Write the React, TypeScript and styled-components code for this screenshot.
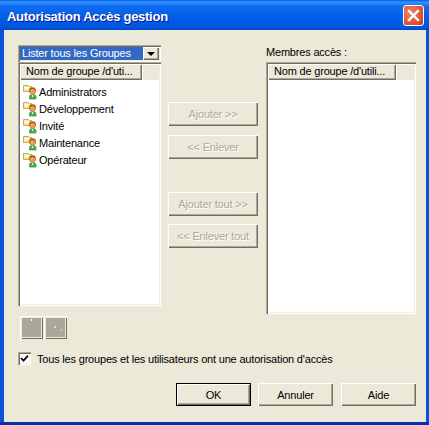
import React from "react";
import styled, { createGlobalStyle } from "styled-components";

const Global = createGlobalStyle`
  html, body { margin: 0; padding: 0; width: 429px; height: 425px; overflow: hidden; background: #ece9d8; }
  * { box-sizing: border-box; }
`;

const raised = `
  background: #ece9d8;
  box-shadow: inset 1px 1px 0 #fff, inset -1px -1px 0 #716f64, inset -2px -2px 0 #aca899;
`;

const sunken = `
  box-shadow: inset 1px 1px 0 #aca899, inset 2px 2px 0 #716f64, inset -1px -1px 0 #fff, inset -2px -2px 0 #f1efe2;
`;

const Window = styled.div`
  width: 429px;
  height: 425px;
  display: flex;
  flex-direction: column;
  font-family: "Liberation Sans", Arial, sans-serif;
  font-size: 11px;
  letter-spacing: -0.19px;
  color: #000;
  background: linear-gradient(180deg, #0855dd 0, #0855dd 422px, #0a2eb0 422px);
`;

const TitleBar = styled.div`
  flex: 0 0 30px;
  display: flex;
  align-items: center;
  justify-content: space-between;
  padding: 1px 5px 0 7px;
  background: linear-gradient(180deg, #0058e6 0%, #3a93ff 7%, #288eff 10%, #0f6cf0 20%, #0560e8 50%, #0058e4 80%, #0055dd 90%, #0046c8 100%);
`;

const Title = styled.div`
  margin-top: 1px;
  font-weight: 700;
  font-size: 13px;
  letter-spacing: -0.27px;
  color: #fff;
  text-shadow: 1px 1px 0 #0f1089;
`;

const CloseButton = styled.div`
  width: 21px;
  height: 21px;
  border: 1px solid #fff;
  border-radius: 3px;
  background: radial-gradient(circle at 35% 35%, #f0876a 0%, #e2593a 55%, #c5391e 100%);
  display: flex;
  align-items: center;
  justify-content: center;
`;

const Frame = styled.div`
  flex: 1;
  display: flex;
  flex-direction: column;
  margin: 0 3px 3px 4px;
  padding: 15px 10px 0 14px;
  background: #ece9d8;
`;

const Columns = styled.div`
  display: grid;
  grid-template-columns: 142px 90px 150px;
  column-gap: 8px;
  height: 294px;
`;

const LeftColumn = styled.div`
  display: flex;
  flex-direction: column;
  width: 143px;
`;

const Combo = styled.div`
  height: 17px;
  display: flex;
  padding: 2px;
  background: #fff;
  ${sunken}
`;

const ComboValue = styled.div`
  flex: 1;
  background: #316ac5;
  color: #fff;
  line-height: 13px;
  padding-left: 2px;
  white-space: nowrap;
`;

const ComboArrow = styled.div`
  flex: 0 0 16px;
  display: flex;
  align-items: center;
  justify-content: center;
  ${raised}
  &::after {
    content: "";
    border-left: 4px solid transparent;
    border-right: 4px solid transparent;
    border-top: 4px solid #000;
  }
`;

const ListView = styled.div<{ $height: number }>`
  height: ${(p) => p.$height}px;
  padding: 2px;
  background: #fff;
  display: flex;
  flex-direction: column;
  ${sunken}
`;

const HeaderRow = styled.div`
  flex: 0 0 16px;
  display: flex;
`;

const HeaderCell = styled.div<{ $width: number }>`
  flex: 0 0 ${(p) => p.$width}px;
  padding-left: 6px;
  line-height: 15px;
  white-space: nowrap;
  overflow: hidden;
  ${raised}
`;

const HeaderFill = styled.div`
  flex: 1;
  background: #ece9d8;
  box-shadow: inset 1px 1px 0 #fff;
`;

const Rows = styled.ul`
  list-style: none;
  margin: 0;
  padding: 3px 0 0 3px;
`;

const Row = styled.li`
  height: 17px;
  display: flex;
  align-items: center;
`;

const MiddleColumn = styled.div`
  display: flex;
  flex-direction: column;
  padding-top: 57px;
`;

const ActionButton = styled.button<{ $gap: number }>`
  width: 90px;
  height: 24px;
  flex: 0 0 24px;
  margin: ${(p) => p.$gap}px 0 0;
  padding: 0;
  border: 0;
  font: inherit;
  letter-spacing: inherit;
  color: #aca899;
  text-shadow: 1px 1px 0 #fff;
  ${raised}
`;

const RightColumn = styled.div`
  display: flex;
  flex-direction: column;
`;

const ColumnLabel = styled.div`
  height: 17px;
  padding-top: 1px;
  line-height: 13px;
`;

const SmallButtons = styled.div`
  display: flex;
  gap: 1px;
  margin: 10px 0 0 2px;
`;

const SmallButton = styled.div`
  width: 23px;
  height: 23px;
  display: flex;
  align-items: center;
  justify-content: center;
  background: #aca899;
  box-shadow: inset 1px 1px 0 #fff, inset 2px 2px 0 #ece9d8, inset -1px -1px 0 #716f64, inset -2px -2px 0 #ece9d8;
`;

const CheckRow = styled.label`
  display: flex;
  align-items: center;
  gap: 6px;
  margin-top: 13px;
  height: 13px;
  white-space: nowrap;
`;

const CheckBox = styled.span`
  width: 13px;
  height: 13px;
  display: flex;
  align-items: center;
  justify-content: center;
  background: #fff;
  ${sunken}
`;

const Footer = styled.div`
  display: flex;
  justify-content: flex-end;
  gap: 8px;
  margin-top: 18px;
`;

const DialogButton = styled.button<{ $isDefault?: boolean }>`
  width: 75px;
  height: 23px;
  padding: 0;
  border: 0;
  font: inherit;
  letter-spacing: inherit;
  color: #000;
  ${raised}
  ${(p) =>
    p.$isDefault
      ? `margin-right: -1px; box-shadow: inset 0 0 0 1px #000, inset 2px 2px 0 #fff, inset -2px -2px 0 #716f64, inset -3px -3px 0 #aca899;`
      : ""}
`;

const GroupIcon = () => (
  <svg width="16" height="16" viewBox="0 0 16 16">
    <path d="M0.5 1.5h5l1 1h2v5h-8z" fill="#fbe98e" stroke="#b8ab7a" />
    <rect x="1.5" y="3" width="4" height="2" fill="#fffbd8" />
    <path d="M6.5 15v-2.5c0-1.3 1.2-2 3-2s3.500.7 3.500 2V15z" fill="#4fb04f" stroke="#2f8a3a" strokeWidth="0.7" />
    <circle cx="9.500" cy="6.700" r="3.400" fill="#b4560f" />
    <circle cx="9.500" cy="7.400" r="2.500" fill="#f0a050" />
    <rect x="9" y="11" width="1.200" height="2" fill="#d8f0d8" />
  </svg>
);

const Cross = () => (
  <svg width="13" height="13" viewBox="0 0 13 13">
    <path d="M2 2l9 9M11 2l-9 9" stroke="#fff" strokeWidth="2.4" strokeLinecap="square" />
  </svg>
);

const Tick = () => (
  <svg width="9" height="9" viewBox="0 0 9 9">
    <path d="M1 4l2.5 2.6L8 1.6" fill="none" stroke="#000" strokeWidth="1.8" />
  </svg>
);

const Dots = ({ d }: { d: string }) => (
  <svg width="17" height="17" viewBox="0 0 17 17">
    <path d={d} stroke="#fff" strokeWidth="1" fill="none" />
  </svg>
);

const groups = ["Administrators", "Développement", "Invité", "Maintenance", "Opérateur"];

export default function App() {
  return (
    <>
      <Global />
      <Window>
        <TitleBar>
          <Title>Autorisation Accès gestion</Title>
          <CloseButton>
            <Cross />
          </CloseButton>
        </TitleBar>
        <Frame>
          <Columns>
            <LeftColumn>
              <Combo>
                <ComboValue>Lister tous les Groupes</ComboValue>
                <ComboArrow />
              </Combo>
              <ListView $height={244}>
                <HeaderRow>
                  <HeaderCell $width={122}>Nom de groupe /d'uti...</HeaderCell>
                  <HeaderFill />
                </HeaderRow>
                <Rows>
                  {groups.map((g) => (
                    <Row key={g}>
                      <GroupIcon />
                      {g}
                    </Row>
                  ))}
                </Rows>
              </ListView>
              <SmallButtons>
                <SmallButton>
                  <Dots d="M8.500 0v2" />
                </SmallButton>
                <SmallButton>
                  <Dots d="M7 8h2M14 11h1" />
                </SmallButton>
              </SmallButtons>
            </LeftColumn>
            <MiddleColumn>
              <ActionButton $gap={0} disabled>Ajouter &gt;&gt;</ActionButton>
              <ActionButton $gap={9} disabled>&lt;&lt; Enlever</ActionButton>
              <ActionButton $gap={33} disabled>Ajouter tout &gt;&gt;</ActionButton>
              <ActionButton $gap={8} disabled>&lt;&lt; Enlever tout</ActionButton>
            </MiddleColumn>
            <RightColumn>
              <ColumnLabel>Membres accès :</ColumnLabel>
              <ListView $height={252}>
                <HeaderRow>
                  <HeaderCell $width={128}>Nom de groupe /d'utili...</HeaderCell>
                  <HeaderFill />
                </HeaderRow>
              </ListView>
            </RightColumn>
          </Columns>
          <CheckRow>
            <CheckBox>
              <Tick />
            </CheckBox>
            Tous les groupes et les utilisateurs ont une autorisation d'accès
          </CheckRow>
          <Footer>
            <DialogButton $isDefault>OK</DialogButton>
            <DialogButton>Annuler</DialogButton>
            <DialogButton>Aide</DialogButton>
          </Footer>
        </Frame>
      </Window>
    </>
  );
}
